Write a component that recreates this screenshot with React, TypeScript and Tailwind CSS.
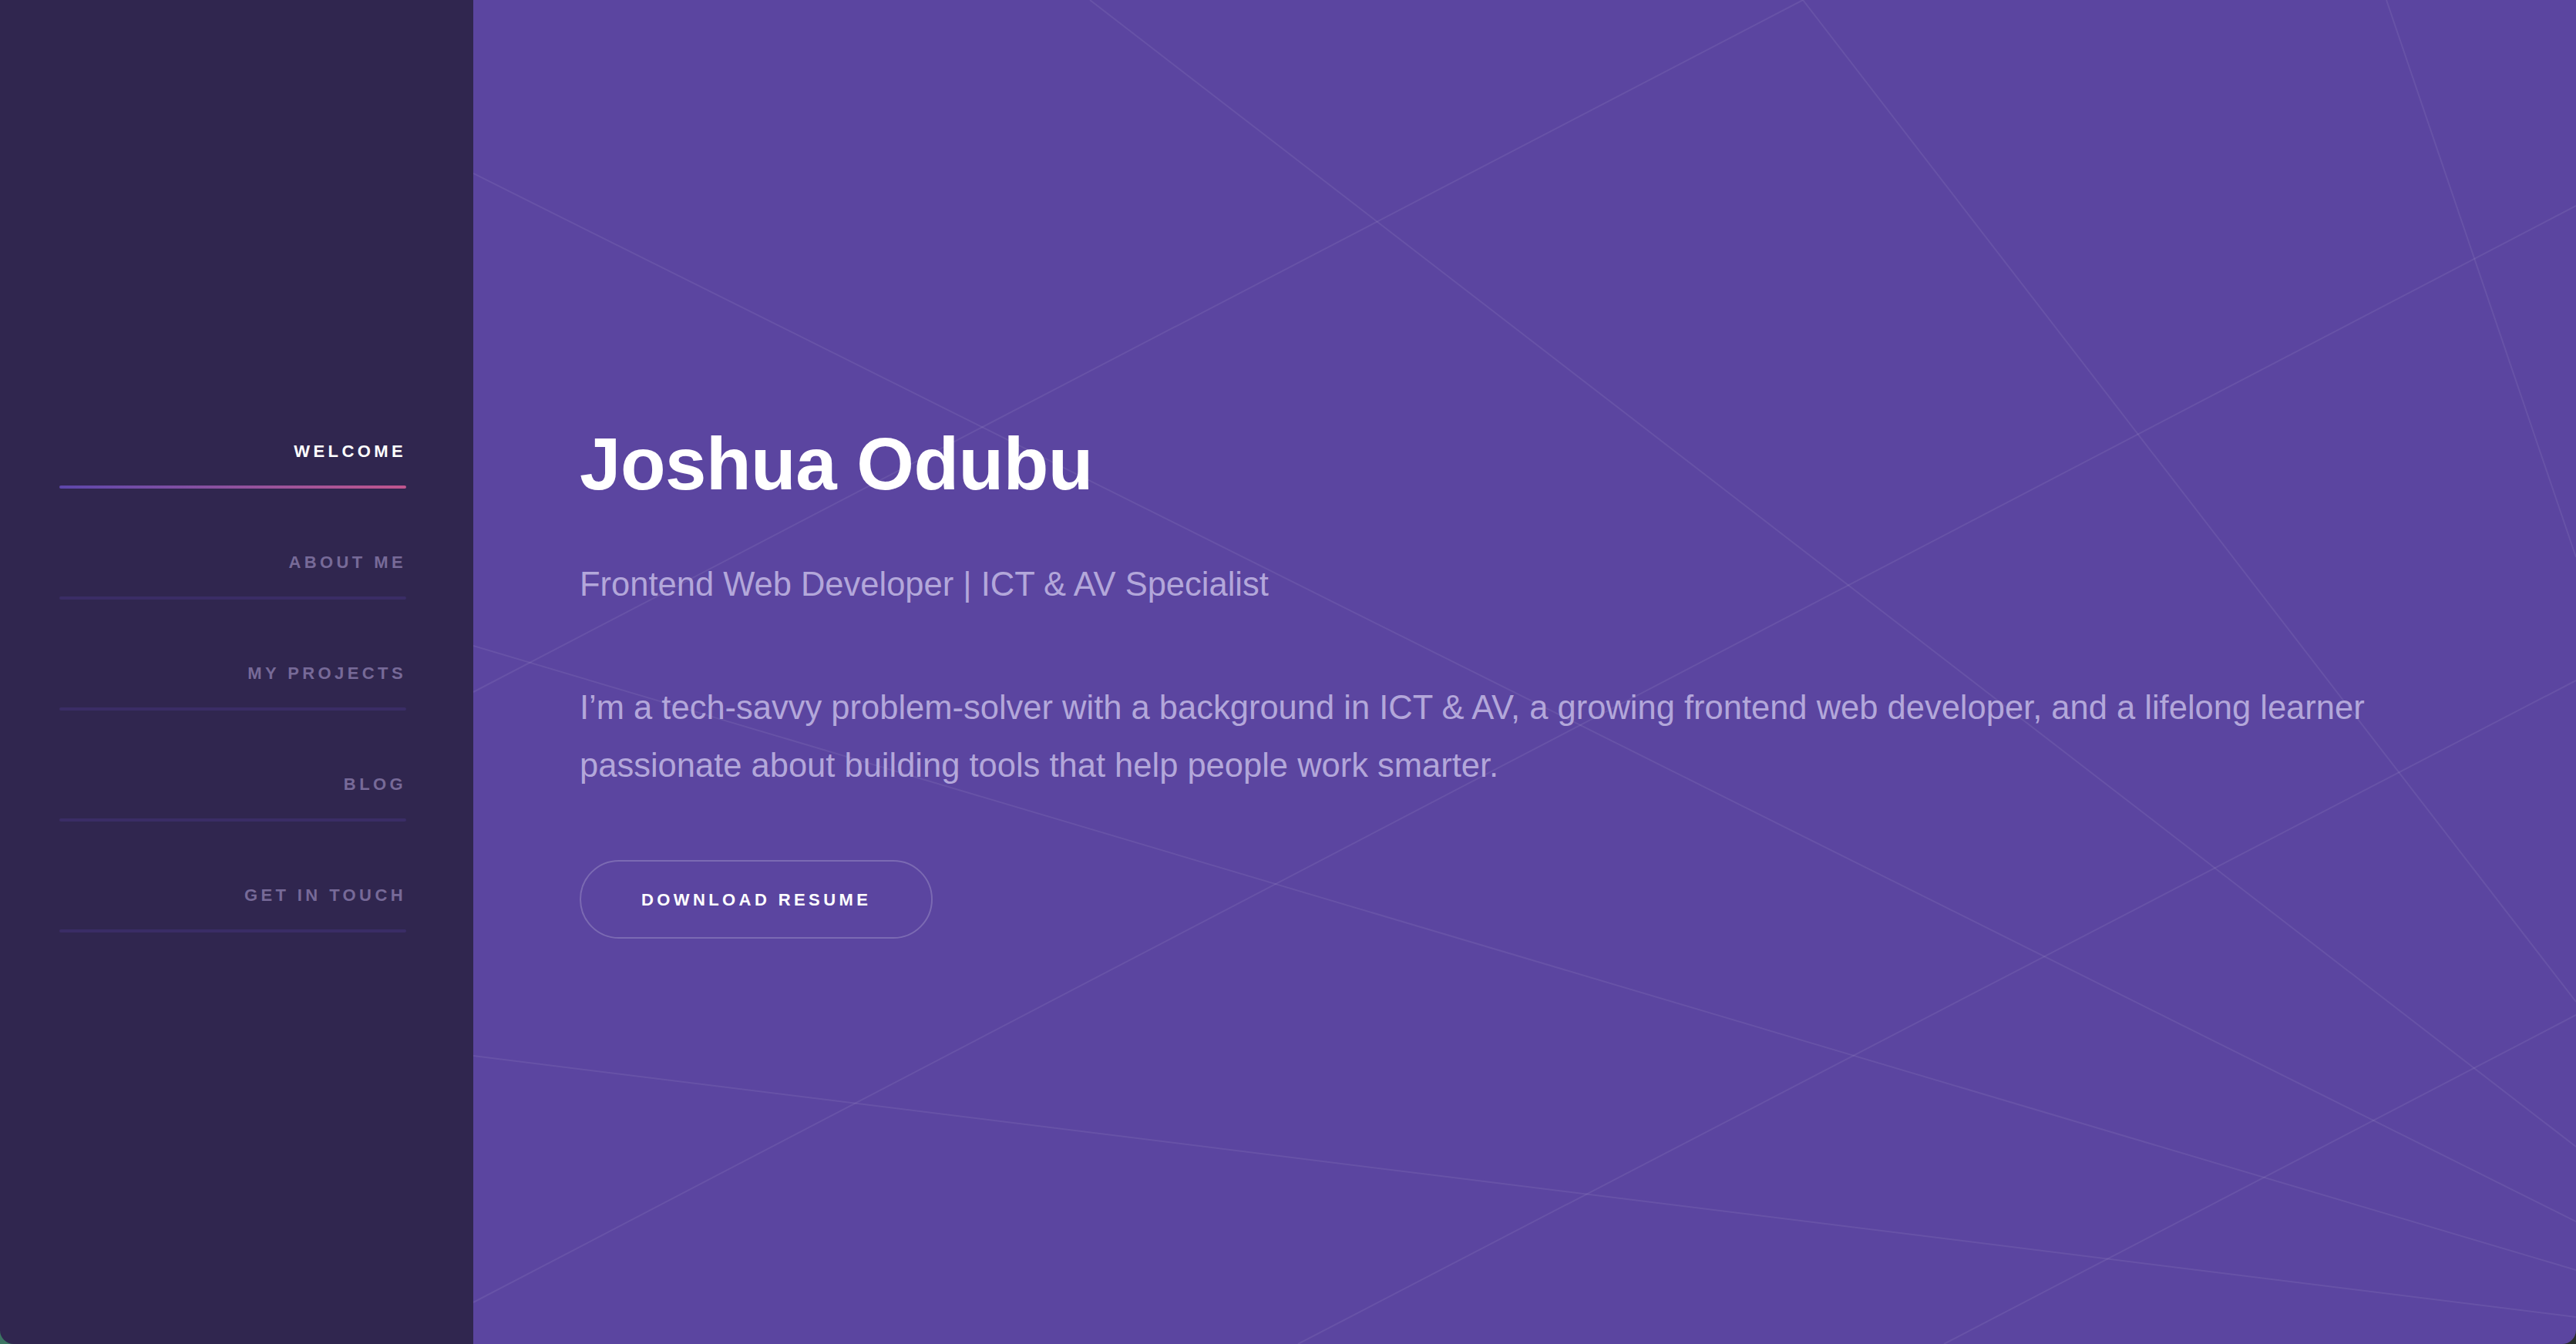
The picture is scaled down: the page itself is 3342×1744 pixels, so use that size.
import React from "react";

const navItems = ["Welcome", "About Me", "My Projects", "Blog", "Get in Touch"];

// background strands, in main-panel coordinates (2728 x 1744)
const strands: [number, number, number, number][] = [
  [0, 225, 2728, 1585],
  [800, 0, 2728, 1488],
  [1725, 0, 0, 898],
  [1725, 0, 2728, 1300],
  [2482, 0, 2728, 723],
  [2728, 267, 0, 1690],
  [0, 1370, 2728, 1709],
  [0, 838, 2728, 1648],
  [2728, 883, 1070, 1744],
  [2728, 1317, 1908, 1744],
];

function Sidebar() {
  return (
    <aside className="w-[614px] shrink-0 bg-[#30264f] pl-[77px] pr-[87px] pt-[490px] rounded-bl-[18px]">
      <nav className="flex flex-col">
        {navItems.map((item, i) => {
          const active = i === 0;
          return (
            <a key={item} href="#" className="block">
              <div
                className={
                  active
                    ? "pt-[85px] pb-[33px] text-right text-[22px] leading-[22px] font-bold uppercase tracking-[0.2em] text-white"
                    : "pt-[85px] pb-[33px] text-right text-[22px] leading-[22px] font-bold uppercase tracking-[0.2em] text-[#776a98]"
                }
              >
                {item}
              </div>
              <div
                className={
                  active
                    ? "h-[4px] rounded-full bg-linear-to-r from-[#5d46ab] to-[#c0558e]"
                    : "h-[4px] rounded-full bg-[#3a2d66]"
                }
              />
            </a>
          );
        })}
      </nav>
    </aside>
  );
}

function Strands() {
  return (
    <svg
      className="absolute inset-0 w-full h-full pointer-events-none"
      viewBox="0 0 2728 1744"
      preserveAspectRatio="none"
    >
      {strands.map(([x1, y1, x2, y2], i) => (
        <line
          key={i}
          x1={x1}
          y1={y1}
          x2={x2}
          y2={y2}
          stroke="rgba(255,255,255,0.075)"
          strokeWidth={2}
        />
      ))}
    </svg>
  );
}

function Hero() {
  return (
    <main className="relative flex-1 overflow-hidden bg-[#5b45a0] pl-[138px] pt-[554px] rounded-br-[18px]">
      <Strands />
      <div className="relative max-w-[2420px]">
        <h1 className="text-[96px] leading-[96px] font-bold tracking-[-0.5px] text-white">
          Joshua Odubu
        </h1>
        <p className="mt-[76px] text-[43.5px] leading-[64px] text-[#b3a7da]">
          Frontend Web Developer | ICT &amp; AV Specialist
        </p>
        <p className="mt-[91px] text-[43.5px] leading-[75px] text-[#b3a7da]">
          I’m a tech-savvy problem-solver with a background in ICT &amp; AV, a growing frontend web
          developer, and a lifelong learner passionate about building tools that help people work
          smarter.
        </p>
        <a
          href="#"
          className="mt-[85px] inline-flex h-[102px] items-center rounded-full border-2 border-white/20 px-[78px] text-[22px] font-bold uppercase tracking-[0.2em] text-white"
        >
          Download Resume
        </a>
      </div>
    </main>
  );
}

export default function App() {
  return (
    <div
      className="h-[1744px] w-[3342px] overflow-hidden bg-linear-to-r from-[#3c7563] to-[#2a2f2c]"
      style={{ fontFamily: '"Liberation Sans", Arial, sans-serif' }}
    >
      <div className="flex h-full">
        <Sidebar />
        <Hero />
      </div>
    </div>
  );
}
